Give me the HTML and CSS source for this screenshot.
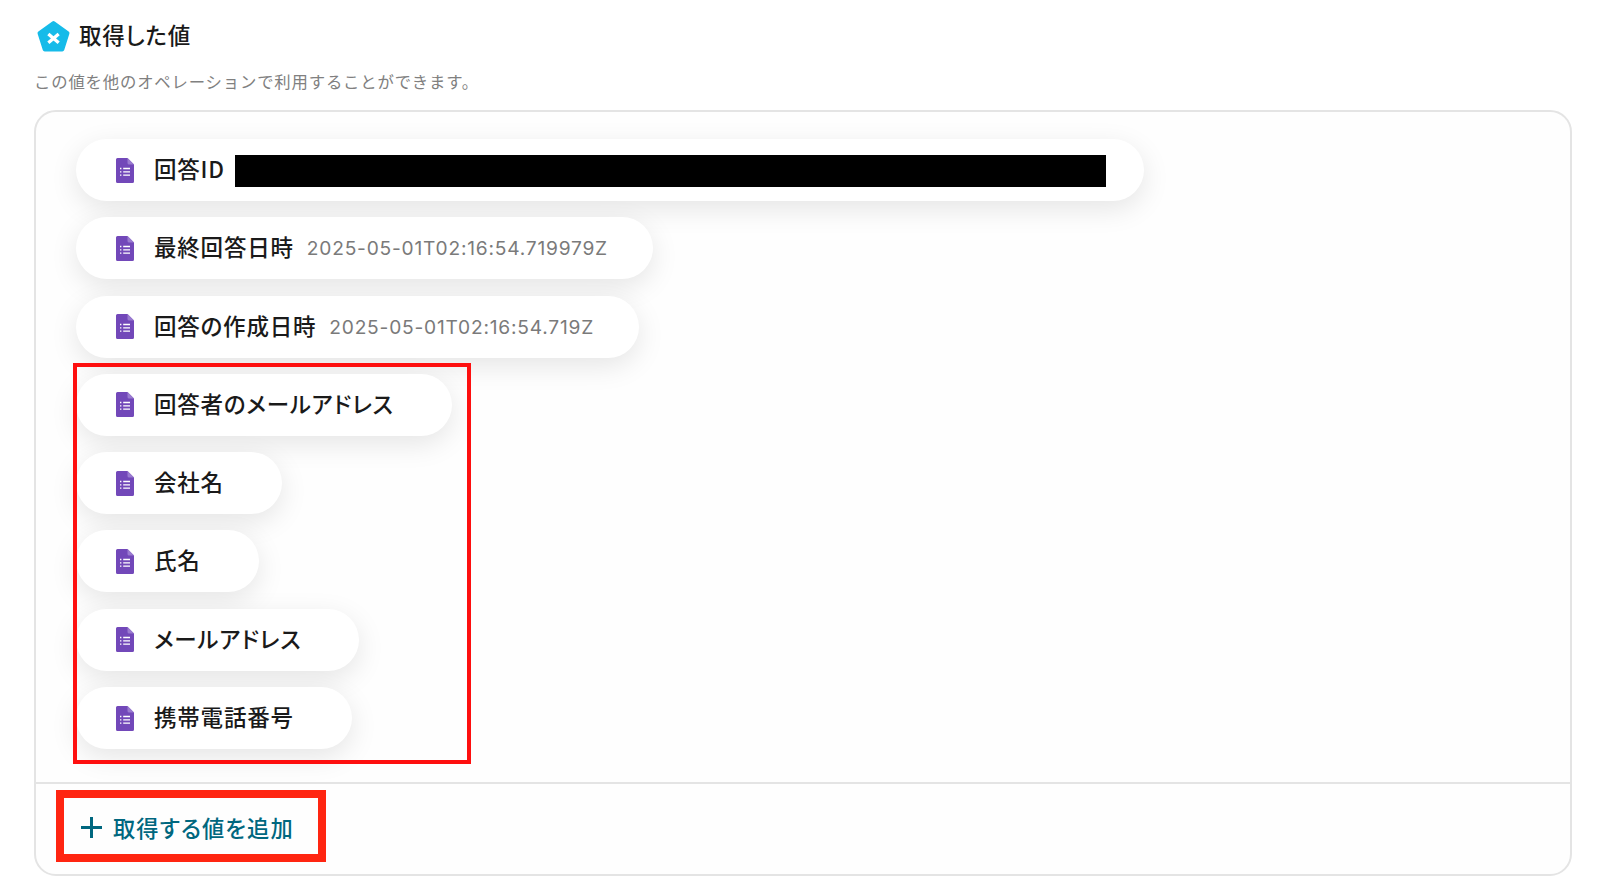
FILE: index.html
```html
<!DOCTYPE html>
<html lang="ja">
<head>
    <meta charset="UTF-8">
    <meta name="viewport" content="width=device-width, initial-scale=1">
    <title>取得した値</title>
    <link rel="stylesheet" href="styles.css">
</head>
<body>
<section class="outputs">
    <h2 class="outputs-title">
        <svg class="title-icon" viewBox="0 0 32 32" aria-hidden="true">
            <path class="title-icon-shape" d="M16 3 L29.5 12.8 L24.5 28.5 L7.5 28.5 L2.5 12.8 Z"/>
            <path class="title-icon-x" d="M11 13.5 L21 22 M21 13.5 L11 22"/>
        </svg>
        <span class="outputs-title-text">取得した値</span>
    </h2>
    <p class="outputs-note">この値を他のオペレーションで利用することができます。</p>

    <div class="outputs-card">
        <ul class="value-list">
            <li class="value-pill">
                <svg class="form-icon" viewBox="0 0 18 25" aria-hidden="true"><use href="#form-doc"/></svg>
                <span class="value-label">回答ID</span>
                <span class="value-redacted"></span>
            </li>
            <li class="value-pill">
                <svg class="form-icon" viewBox="0 0 18 25" aria-hidden="true"><use href="#form-doc"/></svg>
                <span class="value-label">最終回答日時</span>
                <span class="value-text">2025-05-01T02:16:54.719979Z</span>
            </li>
            <li class="value-pill">
                <svg class="form-icon" viewBox="0 0 18 25" aria-hidden="true"><use href="#form-doc"/></svg>
                <span class="value-label">回答の作成日時</span>
                <span class="value-text">2025-05-01T02:16:54.719Z</span>
            </li>
            <li class="value-pill">
                <svg class="form-icon" viewBox="0 0 18 25" aria-hidden="true"><use href="#form-doc"/></svg>
                <span class="value-label">回答者のメールアドレス</span>
            </li>
            <li class="value-pill">
                <svg class="form-icon" viewBox="0 0 18 25" aria-hidden="true"><use href="#form-doc"/></svg>
                <span class="value-label">会社名</span>
            </li>
            <li class="value-pill">
                <svg class="form-icon" viewBox="0 0 18 25" aria-hidden="true"><use href="#form-doc"/></svg>
                <span class="value-label">氏名</span>
            </li>
            <li class="value-pill">
                <svg class="form-icon" viewBox="0 0 18 25" aria-hidden="true"><use href="#form-doc"/></svg>
                <span class="value-label">メールアドレス</span>
            </li>
            <li class="value-pill">
                <svg class="form-icon" viewBox="0 0 18 25" aria-hidden="true"><use href="#form-doc"/></svg>
                <span class="value-label">携帯電話番号</span>
            </li>
        </ul>

        <div class="card-footer">
            <button class="add-button" type="button">
                <svg class="add-icon" viewBox="0 0 21 21" aria-hidden="true"><path d="M10.5 0 V21 M0 10.5 H21"/></svg>
                取得する値を追加
            </button>
        </div>

        <!-- Red annotation frames drawn over the card -->
        <div class="mark mark-values"></div>
        <div class="mark mark-add"></div>
    </div>
</section>

<svg class="icon-defs" aria-hidden="true">
    <symbol id="form-doc" viewBox="0 0 18 25">
        <path class="form-doc-sheet" d="M1.5 0 H11.5 L18 6.5 V23.5 A1.5 1.5 0 0 1 16.5 25 H1.5 A1.5 1.5 0 0 1 0 23.5 V1.5 A1.5 1.5 0 0 1 1.5 0 Z"/>
        <path class="form-doc-fold" d="M11.5 0 L18 6.5 H13 A1.5 1.5 0 0 1 11.5 5 Z"/>
        <path class="form-doc-lines" d="M4 10.5 H5.4 M7.2 10.5 H14 M4 13.8 H5.4 M7.2 13.8 H14 M4 17.1 H5.4 M7.2 17.1 H14"/>
    </symbol>
</svg>
</body>
</html>
```

FILE: styles.css
```css
:root {
    --text-color: #1a1a1a;
    --muted-color: #808080;
    --value-color: #7a7a7a;
    --border-color: #e4e4e4;
    --accent-color: #00677f;
    --form-color: #7248b9;
}

* {
    box-sizing: border-box;
}

body {
    margin: 0;
    background-color: #fff;
    color: var(--text-color);
    font-family: "Noto Sans CJK JP", "Noto Sans", sans-serif;
    font-feature-settings: "palt";
    letter-spacing: 0.05em;
}

.outputs {
    padding: 20px 28px 0 34px;
}

/* Heading */
.outputs-title {
    display: flex;
    align-items: center;
    gap: 9px;
    height: 32px;
    margin: 0 0 0 3px;
    font-size: 22.5px;
    font-weight: 500;
}

.outputs-title-text {
    padding-bottom: 4px;
}

.title-icon {
    width: 33px;
    height: 33px;
}

.title-icon-shape {
    fill: #16bbe9;
    stroke: #16bbe9;
    stroke-width: 4;
    stroke-linejoin: round;
}

.title-icon-x {
    fill: none;
    stroke: #fff;
    stroke-width: 3.2;
}

.outputs-note {
    margin: 17px 0 17px;
    color: var(--muted-color);
    font-feature-settings: normal;
    font-size: 16.4px;
    line-height: 24px;
}

/* Card */
.outputs-card {
    position: relative;
    height: 766px;
    background-color: #fefefe;
    border: 2px solid var(--border-color);
    border-radius: 22px;
}

.value-list {
    display: flex;
    flex-direction: column;
    align-items: flex-start;
    gap: 16.3px;
    height: 670px;
    margin: 0;
    padding: 27px 0 0 40px;
    list-style: none;
}

.value-pill {
    display: flex;
    align-items: center;
    height: 62px;
    padding: 0 45px 0 40px;
    background-color: #fff;
    border-radius: 31px;
    box-shadow: 0 8px 28px rgba(0, 0, 0, 0.1);
}

.form-icon {
    flex: none;
    width: 18px;
    height: 25px;
    margin-right: 20px;
}

.form-doc-sheet {
    fill: var(--form-color);
}

.form-doc-fold {
    fill: #9a7bd0;
}

.form-doc-lines {
    fill: none;
    stroke: #fff;
    stroke-width: 1.3;
}

.value-label {
    margin-right: 13px;
    padding-bottom: 4px;
    font-size: 22.5px;
    font-weight: 500;
    white-space: nowrap;
}

.value-text {
    color: var(--value-color);
    font-family: Inter, "Noto Sans", sans-serif;
    font-size: 19.15px;
    white-space: nowrap;
}

.value-redacted {
    width: 871px;
    height: 32px;
    margin: 2px -7px 0 -3px;
    background-color: #000;
}

/* Footer */
.card-footer {
    padding: 27px 0 0 45px;
    border-top: 2px solid var(--border-color);
}

.add-button {
    display: flex;
    align-items: center;
    gap: 11px;
    padding: 0;
    background: none;
    border: none;
    color: var(--accent-color);
    font-family: inherit;
    font-feature-settings: inherit;
    font-size: 22.25px;
    font-weight: 500;
    letter-spacing: 0.05em;
    line-height: 32px;
}

.add-icon {
    width: 21px;
    height: 21px;
}

.add-icon path {
    fill: none;
    stroke: var(--accent-color);
    stroke-width: 3;
}

/* Annotation frames */
.mark {
    position: absolute;
    pointer-events: none;
}

.mark-values {
    top: 251px;
    left: 37px;
    width: 398px;
    height: 401px;
    border: 4px solid #fe0f0f;
}

.mark-add {
    top: 678px;
    left: 20px;
    width: 270px;
    height: 72px;
    border: 8px solid #ff2511;
}

.icon-defs {
    display: none;
}
```
